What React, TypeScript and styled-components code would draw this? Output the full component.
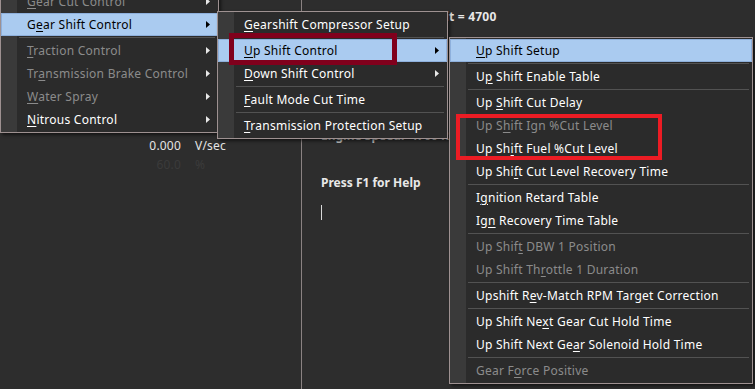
import React from "react";
import styled, { createGlobalStyle } from "styled-components";

const GlobalStyle = createGlobalStyle`
  html, body { margin: 0; padding: 0; background: #2d2d2d; overflow: hidden; }
  * { box-sizing: border-box; }
`;

const Screen = styled.div`
  position: relative;
  width: 755px;
  height: 389px;
  overflow: hidden;
  display: flex;
  background: #2d2d2d;
  font-family: "Noto Sans", "Open Sans", sans-serif;
  font-size: 12px;
`;

const LeftPane = styled.div`
  width: 301px;
  flex: none;
  padding-top: 136px;
`;

const Readouts = styled.div`
  display: grid;
  grid-template-columns: 181px auto;
  column-gap: 14px;
  grid-auto-rows: 19px;
  align-items: center;
  letter-spacing: 0.2px;
`;

const Value = styled.div<{ $dim?: boolean }>`
  text-align: right;
  color: ${(p) => (p.$dim ? "#3b3b3b" : "#e4e4e4")};
`;

const Unit = styled.div<{ $dim?: boolean }>`
  color: ${(p) => (p.$dim ? "#3b3b3b" : "#e4e4e4")};
`;

const RightPane = styled.div`
  flex: 1;
  border-left: 1px solid #8a8282;
  padding: 8px 0 0 19px;
  display: flex;
  flex-direction: column;
`;

const InfoLine = styled.div<{ $gap: number; $muted?: boolean; $tracking?: number }>`
  margin-top: ${(p) => p.$gap}px;
  height: 18px;
  line-height: 18px;
  font-weight: 700;
  letter-spacing: ${(p) => p.$tracking ?? 0}px;
  color: ${(p) => (p.$muted ? "#b8b8b8" : "#e8e8e8")};
  white-space: nowrap;
`;

const Caret = styled.div`
  margin-top: 13px;
  width: 1px;
  height: 15px;
  background: #d8d8d8;
`;

const Menu = styled.div<{ $left: number; $top: number; $width: number }>`
  position: absolute;
  left: ${(p) => p.$left}px;
  top: ${(p) => p.$top}px;
  width: ${(p) => p.$width}px;
  border: 1px solid #9e9191;
  padding: 1px 0;
  background: linear-gradient(to right, #3a3a3a 16px, #2b2b2b 16px);
  box-shadow: 2px 2px 3px rgba(0, 0, 0, 0.55);
  display: flex;
  flex-direction: column;
`;

const Item = styled.div<{ $disabled?: boolean; $active?: boolean }>`
  height: 23px;
  display: flex;
  align-items: center;
  padding-left: 26px;
  padding-right: 8px;
  white-space: nowrap;
  letter-spacing: 0.25px;
  color: ${(p) => (p.$active ? "#000" : p.$disabled ? "#8b8b8b" : "#ffffff")};
  background: ${(p) => (p.$active ? "#aacbf0" : "transparent")};
  box-shadow: ${(p) => (p.$active ? "inset 0 0 0 1px #8eb0dc" : "none")};
  u { text-decoration-thickness: 1px; text-underline-offset: 2px; }
`;

const Label = styled.span`
  flex: 1;
`;

const Separator = styled.div`
  height: 3px;
  display: flex;
  align-items: center;
  padding: 0 3px 0 18px;
  &::after {
    content: "";
    flex: 1;
    height: 1px;
    background: #525252;
  }
`;

const Callout = styled.div<{ $left: number; $top: number; $w: number; $h: number; $color: string; $thick: number }>`
  position: absolute;
  left: ${(p) => p.$left}px;
  top: ${(p) => p.$top}px;
  width: ${(p) => p.$w}px;
  height: ${(p) => p.$h}px;
  border: ${(p) => p.$thick}px solid ${(p) => p.$color};
  pointer-events: none;
`;

const Arrow = ({ dark }: { dark?: boolean }) => (
  <svg width="4" height="7" viewBox="0 0 4 7">
    <path d="M0 0 L4 3.5 L0 7 Z" fill={dark ? "#000" : "#e8e8e8"} />
  </svg>
);

type Entry =
  | { sep: true }
  | { label: string; disabled?: boolean; active?: boolean; sub?: boolean };

const renderLabel = (s: string) => {
  const i = s.indexOf("&");
  if (i < 0) return s;
  return (
    <>
      {s.slice(0, i)}
      <u>{s[i + 1]}</u>
      {s.slice(i + 2)}
    </>
  );
};

const MenuList = ({ entries }: { entries: Entry[] }) => (
  <>
    {entries.map((e, idx) =>
      "sep" in e ? (
        <Separator key={idx} />
      ) : (
        <Item key={idx} $disabled={e.disabled} $active={e.active}>
          <Label>{renderLabel(e.label)}</Label>
          {e.sub && <Arrow dark={e.active} />}
        </Item>
      )
    )}
  </>
);

const menu1: Entry[] = [
  { label: "&Gear Cut Control", disabled: true, sub: true },
  { label: "G&ear Shift Control", active: true, sub: true },
  { sep: true },
  { label: "&Traction Control", disabled: true, sub: true },
  { label: "Tr&ansmission Brake Control", disabled: true, sub: true },
  { label: "&Water Spray", disabled: true, sub: true },
  { label: "&Nitrous Control", sub: true },
];

const menu2: Entry[] = [
  { label: "&Gearshift Compressor Setup" },
  { sep: true },
  { label: "&Up Shift Control", active: true, sub: true },
  { label: "&Down Shift Control", sub: true },
  { sep: true },
  { label: "&Fault Mode Cut Time" },
  { sep: true },
  { label: "&Transmission Protection Setup" },
];

const menu3: Entry[] = [
  { label: "&Up Shift Setup", active: true },
  { sep: true },
  { label: "U&p Shift Enable Table" },
  { sep: true },
  { label: "Up &Shift Cut Delay" },
  { label: "Up S&hift Ign %Cut Level", disabled: true },
  { label: "Up Sh&ift Fuel %Cut Level" },
  { label: "Up Shi&ft Cut Level Recovery Time" },
  { sep: true },
  { label: "I&gnition Retard Table" },
  { label: "Ig&n Recovery Time Table" },
  { sep: true },
  { label: "Up Shif&t DBW 1 Position", disabled: true },
  { label: "Up Shift Th&rottle 1 Duration", disabled: true },
  { sep: true },
  { label: "Upshift R&ev-Match RPM Target Correction" },
  { sep: true },
  { label: "Up Shift Ne&xt Gear Cut Hold Time" },
  { label: "Up Shift Next Ge&ar Solenoid Hold Time" },
  { sep: true },
  { label: "Gear F&orce Positive", disabled: true },
];

export default function App() {
  return (
    <>
      <GlobalStyle />
      <Screen>
        <LeftPane>
          <Readouts>
            <Value>0.000</Value>
            <Unit>V/sec</Unit>
            <Value $dim>60.0</Value>
            <Unit $dim>%</Unit>
          </Readouts>
        </LeftPane>
        <RightPane>
          <InfoLine $gap={0} $tracking={0.2}>Engine Speed at Limit = 4700</InfoLine>
          <InfoLine $gap={101} $muted>Engine Speed:&nbsp; 4700 RPM</InfoLine>
          <InfoLine $gap={29}>Press F1 for Help</InfoLine>
          <Caret />
        </RightPane>

        <Menu $left={0} $top={-12} $width={219}>
          <MenuList entries={menu1} />
        </Menu>
        <Menu $left={217} $top={11} $width={231}>
          <MenuList entries={menu2} />
        </Menu>
        <Menu $left={449} $top={37} $width={304}>
          <MenuList entries={menu3} />
        </Menu>

        <Callout $left={229} $top={33} $w={168} $h={32} $color="#80001c" $thick={5} />
        <Callout $left={456} $top={114} $w={206} $h={46} $color="#ec1c24" $thick={4} />
      </Screen>
    </>
  );
}
